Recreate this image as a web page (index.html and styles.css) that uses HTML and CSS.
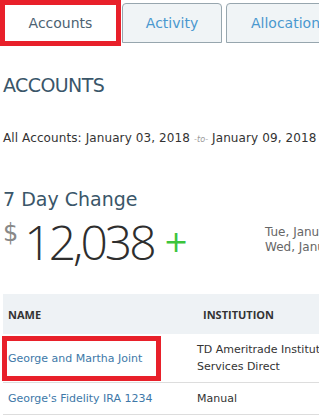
FILE: index.html
```html
<!DOCTYPE html>
<html lang="en">
<head>
    <meta charset="UTF-8">
    <meta name="viewport" content="width=device-width, initial-scale=1.0">
    <title>Accounts</title>
    <link rel="stylesheet" href="styles.css">
</head>
<body>
    <ul class="tabs">
        <li class="tab active marked">Accounts</li>
        <li class="tab">Activity</li>
        <li class="tab wide">Allocation</li>
    </ul>

    <div class="content">
        <h1 class="page-title">ACCOUNTS</h1>
        <p class="range">All Accounts: January 03, 2018 <span class="to">-to-</span> January 09, 2018</p>

        <h2 class="change-title">7 Day Change</h2>
        <div class="change">
            <div class="amount">
                <span class="currency">$</span>
                <span class="value">12,038</span>
                <span class="plus">+</span>
            </div>
            <div class="dates">
                <div>Tue, January 02, 2018</div>
                <div>Wed, January 09, 2018</div>
            </div>
        </div>

        <table class="accounts">
            <thead>
                <tr>
                    <th class="col-name">NAME</th>
                    <th class="col-inst">INSTITUTION</th>
                    <th>BALANCE</th>
                </tr>
            </thead>
            <tbody>
                <tr class="row-tall">
                    <td class="boxed-cell">
                        <div class="marked-box"><a href="#">George and Martha Joint</a></div>
                    </td>
                    <td>TD Ameritrade Institutional<br>Services Direct</td>
                    <td>$ 245,120</td>
                </tr>
                <tr>
                    <td><a href="#">George's Fidelity IRA 1234</a></td>
                    <td>Manual</td>
                    <td>$ 88,410</td>
                </tr>
            </tbody>
        </table>
    </div>
</body>
</html>
```

FILE: styles.css
```css
html, body {
    margin: 0;
    padding: 0;
    overflow: hidden;
}
body {
    font-family: "DejaVu Sans", "Open Sans", sans-serif;
    color: #333;
    background: #fff;
    width: 319px;
}
.tabs {
    display: flex;
    list-style: none;
    margin: 0;
    padding: 3px 0 0 0;
    height: 40px;
    white-space: nowrap;
}
.tab {
    box-sizing: border-box;
    height: 40px;
    width: 100px;
    margin-right: 4px;
    display: flex;
    align-items: center;
    justify-content: center;
    font-size: 14px;
    color: #4a98cf;
    background: #f0f4f6;
    border: 1px solid #97a6ae;
    border-radius: 4px 4px 0 0;
    flex-shrink: 0;
}
.tab.wide {
    width: auto;
    padding: 0 24px;
}
.tab.active {
    background: #fff;
    color: #4d6272;
}
.tab.marked {
    margin-top: -3px;
    margin-right: 1px;
    height: 46px;
    width: 121px;
    border: 5px solid #e8202a;
    border-radius: 0;
}
.content {
    padding: 0 3px;
}
.page-title {
    margin: 30px 0 0 0;
    font-size: 19px;
    font-weight: 400;
    color: #3a5669;
    line-height: 24px;
    letter-spacing: -0.6px;
}
.range {
    margin: 34px 0 0 0;
    font-size: 12px;
    line-height: 14px;
    white-space: nowrap;
    letter-spacing: 0.1px;
}
.range .to {
    font-size: 8px;
    font-style: italic;
    color: #999;
}
.change-title {
    margin: 40px 0 0 0;
    font-size: 19px;
    font-weight: 400;
    color: #3a5669;
    line-height: 24px;
}
.change {
    display: flex;
    align-items: flex-start;
    margin-top: 5px;
}
.amount {
    display: flex;
    align-items: flex-start;
    width: 262px;
    flex-shrink: 0;
}
.currency {
    font-size: 24px;
    color: #888;
    line-height: 26px;
    margin-top: 4px;
}
.value {
    font-family: "Open Sans", sans-serif;
    font-weight: 300;
    font-size: 48px;
    line-height: 52px;
    margin-left: 6px;
    color: #2e2e2e;
    letter-spacing: -3px;
}
.plus {
    font-size: 30px;
    color: #3cc43c;
    margin-left: 10px;
    line-height: 52px;
}
.dates {
    font-size: 12px;
    color: #666;
    line-height: 15px;
    margin-top: 9px;
    white-space: nowrap;
}
.accounts {
    margin-top: 26px;
    width: 600px;
    border-collapse: collapse;
}
.accounts th {
    background: #eef2f5;
    font-family: "Open Sans", sans-serif;
    font-size: 11px;
    font-weight: 700;
    color: #333;
    text-align: left;
    height: 40px;
    padding: 0 5px;
}
.accounts th.col-name {
    width: 179px;
}
.accounts th.col-inst {
    padding-left: 11px;
}
.accounts td {
    font-size: 11px;
    line-height: 17px;
    padding: 7px 5px;
    border-bottom: 1px solid #ddd;
    vertical-align: middle;
}
.accounts .row-tall td {
    height: 34px;
}
.accounts td.boxed-cell {
    padding: 0;
}
.marked-box {
    box-sizing: border-box;
    width: 159px;
    height: 45px;
    margin: 2px 0 1px -1px;
    padding-left: 1px;
    border: 5px solid #e8202a;
    display: flex;
    align-items: center;
}
.accounts a {
    color: #3d78a8;
    text-decoration: none;
}
```
